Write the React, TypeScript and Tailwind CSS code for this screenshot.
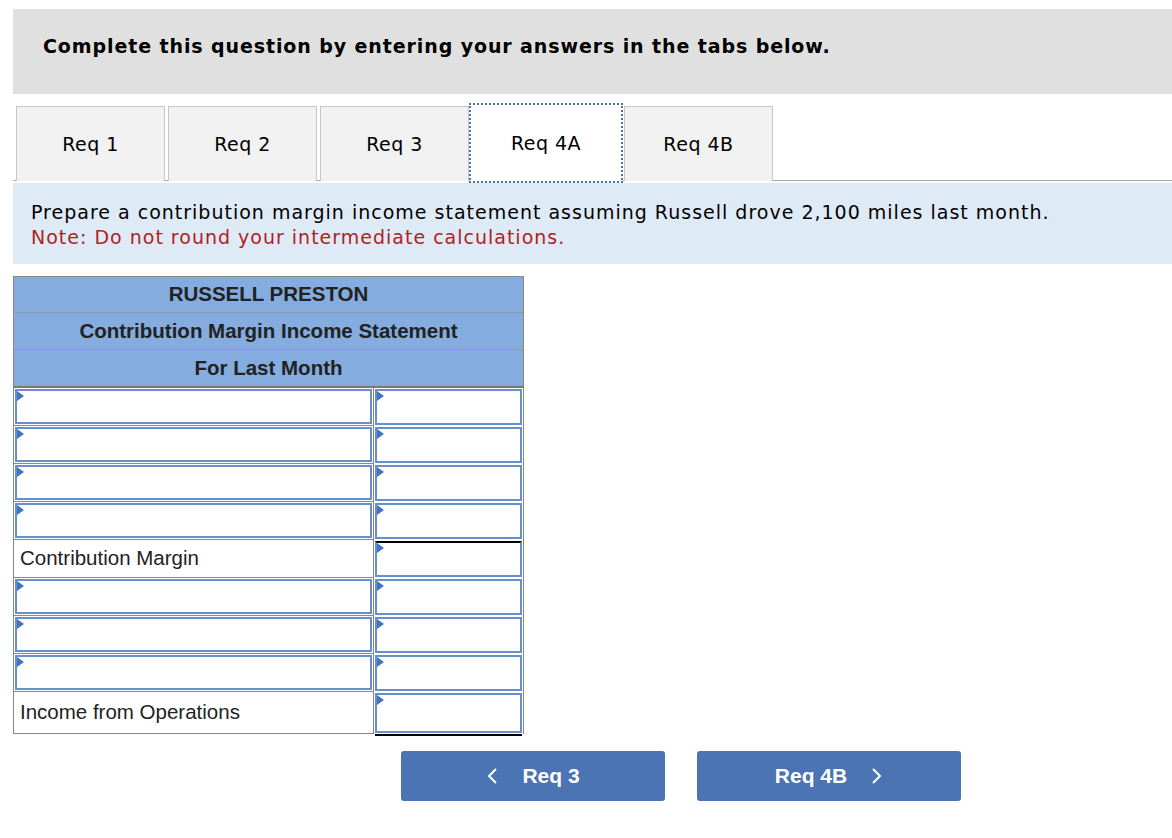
import React from "react";

const verdana = "font-['Verdana','DejaVu_Sans',sans-serif]";
const arial = "font-['Helvetica','Liberation_Sans',sans-serif]";

const tabs = ["Req 1", "Req 2", "Req 3", "Req 4A", "Req 4B"];
const active = "Req 4A";

type Row = { kind: "input" } | { kind: "label"; text: string; total: "single" | "double" };

const rows: Row[] = [
  { kind: "input" },
  { kind: "input" },
  { kind: "input" },
  { kind: "input" },
  { kind: "label", text: "Contribution Margin", total: "single" },
  { kind: "input" },
  { kind: "input" },
  { kind: "input" },
  { kind: "label", text: "Income from Operations", total: "double" },
];

function Marker() {
  return (
    <svg
      className="absolute left-0 top-0"
      width="8"
      height="11"
      viewBox="0 0 8 11"
    >
      <path d="M0 0 L7 5 L0 10 Z" fill="#4472c4" />
    </svg>
  );
}

function InputBox({ className = "" }: { className?: string }) {
  return (
    <div
      className={`relative h-full border-2 border-[#6690cc] bg-white ${className}`}
    >
      <Marker />
    </div>
  );
}

function Statement() {
  return (
    <div className={`w-[511px] ${arial} text-[#222]`}>
      <div className="border border-[#888] border-b-2 border-b-[#777] bg-[#84acdf]">
        <div className="flex h-[36px] items-center justify-center border-b border-[#8a9bb0] text-[20.5px] font-bold">
          RUSSELL PRESTON
        </div>
        <div className="flex h-[37px] items-center justify-center border-b border-[#8a9bb0] text-[20.5px] font-bold">
          Contribution Margin Income Statement
        </div>
        <div className="flex h-[36px] items-center justify-center text-[20.5px] font-bold">
          For Last Month
        </div>
      </div>
      {rows.map((r, i) => (
        <div
          key={i}
          className={`flex border-l border-[#888] ${
            r.kind === "label" && r.total === "double" ? "h-[42px]" : "h-[38px]"
          }`}
        >
          <div
            className={`w-[360px] border-b border-r border-[#888] ${
              r.kind === "input" ? "p-[1px]" : "flex items-center pl-[6px] text-[20.5px]"
            }`}
          >
            {r.kind === "input" ? <InputBox /> : r.text}
          </div>
          <div className="flex-1 border-r border-[#888] p-[1px]">
            {r.kind === "label" && r.total === "double" ? (
              <div className="flex h-full flex-col">
                <InputBox className="h-[38px] flex-none" />
                <div className="mt-[1px] h-[4px] border-y border-black" />
              </div>
            ) : (
              <InputBox
                className={r.kind === "label" ? "border-t-black" : ""}
              />
            )}
          </div>
        </div>
      ))}
    </div>
  );
}

export default function App() {
  return (
    <div className="min-h-[838px] bg-white pl-[13px] pt-[9px]">
      <div
        className={`h-[85px] bg-[#e0e0e0] pl-[30px] pt-[23px] text-[19px] font-bold tracking-[0.9px] text-black ${verdana}`}
      >
        Complete this question by entering your answers in the tabs below.
      </div>

      <div className={`mt-[12px] flex h-[75px] border-b border-[#a6a6a6] pl-[3px] ${verdana}`}>
        {tabs.map((t, i) =>
          t === active ? (
            <div
              key={t}
              className="relative z-10 -mt-[3px] flex h-[80px] w-[154px] items-center justify-center border-2 border-dotted border-[#4b72b0] bg-white text-[19px] tracking-[0.5px] text-black"
            >
              {t}
            </div>
          ) : (
            <div
              key={t}
              className={`flex h-[75px] w-[149px] items-center justify-center border border-b-0 border-[#c6c6c6] bg-[#f2f2f2] text-[19px] tracking-[0.5px] text-black ${
                i < 2 ? "mr-[3px]" : i === 4 ? "ml-[1px]" : ""
              }`}
            >
              {t}
            </div>
          )
        )}
      </div>

      <div
        className={`mt-[2px] h-[81px] bg-[#deebf7] pl-[18px] pt-[17px] text-[19px] leading-[25px] tracking-[1px] ${verdana}`}
      >
        <p className="text-black">
          Prepare a contribution margin income statement assuming Russell drove
          2,100 miles last month.
        </p>
        <p className="text-[#b01e1e]">
          Note: Do not round your intermediate calculations.
        </p>
      </div>

      <div className="mt-[12px]">
        <Statement />
      </div>

      <div className={`mt-[17px] flex gap-[32px] pl-[388px] ${arial}`}>
        <button
          type="button"
          className="flex h-[50px] w-[264px] items-center justify-center gap-[24px] rounded-[3px] bg-[#4a74b4] text-[21px] font-bold text-white"
        >
          <svg width="12" height="18" viewBox="0 0 12 18">
            <path d="M10 2 L3 9 L10 16" fill="none" stroke="white" strokeWidth="2" />
          </svg>
          Req 3
        </button>
        <button
          type="button"
          className="flex h-[50px] w-[264px] items-center justify-center gap-[24px] rounded-[3px] bg-[#4a74b4] text-[21px] font-bold text-white"
        >
          Req 4B
          <svg width="12" height="18" viewBox="0 0 12 18">
            <path d="M2 2 L9 9 L2 16" fill="none" stroke="white" strokeWidth="2" />
          </svg>
        </button>
      </div>
    </div>
  );
}
